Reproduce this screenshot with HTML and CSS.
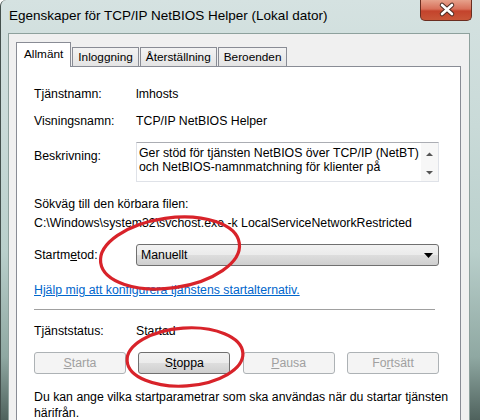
FILE: index.html
```html
<!DOCTYPE html>
<html lang="sv">
<head>
<meta charset="utf-8">
<link rel="stylesheet" href="styles.css">
</head>
<body>
<div class="window">
  <div class="titlebar">
    <span class="title">Egenskaper för TCP/IP NetBIOS Helper (Lokal dator)</span>
    <div class="close">
      <svg width="52" height="21" viewBox="0 0 52 21">
        <path d="M21 6 L31 15 M31 6 L21 15" stroke="#4a2a22" stroke-width="4.5" stroke-linecap="round"/>
        <path d="M21 6 L31 15 M31 6 L21 15" stroke="#ffffff" stroke-width="2.6" stroke-linecap="round"/>
      </svg>
    </div>
  </div>
  <div class="client">
    <div class="tabs">
      <div class="tab active">Allmänt</div>
      <div class="tab">Inloggning</div>
      <div class="tab">Återställning</div>
      <div class="tab">Beroenden</div>
    </div>
    <div class="panel">
      <div class="row r-name"><span class="label">Tjänstnamn:</span><span>lmhosts</span></div>
      <div class="row r-display"><span class="label">Visningsnamn:</span><span>TCP/IP NetBIOS Helper</span></div>
      <div class="row r-desc">
        <span class="label label-desc">Beskrivning:</span>
        <div class="desc-box">
          <div class="desc-text">Ger stöd för tjänsten NetBIOS över TCP/IP (NetBT) och NetBIOS-namnmatchning för klienter på</div>
          <div class="scroll">
            <svg width="17" height="38" viewBox="0 0 17 38">
              <path d="M5 13 L8.5 9.5 L12 13 Z" fill="#555"/>
              <path d="M5 28 L8.5 31.5 L12 28 Z" fill="#555"/>
            </svg>
          </div>
        </div>
      </div>
      <div class="path-label">Sökväg till den körbara filen:</div>
      <div class="path">C:\Windows\system32\svchost.exe -k LocalServiceNetworkRestricted</div>
      <div class="row r-start">
        <span class="label">Startm<u>e</u>tod:</span>
        <div class="combo">
          <span>Manuellt</span>
          <svg width="9" height="5" viewBox="0 0 9 5"><path d="M0 0 H9 L4.5 5 Z" fill="#000"/></svg>
        </div>
      </div>
      <a class="help" href="#">Hjälp mig att konfigurera tjänstens startalternativ.</a>
      <div class="sep"></div>
      <div class="row r-status"><span class="label">Tjänststatus:</span><span>Startad</span></div>
      <div class="buttons">
        <button class="btn" disabled><u>S</u>tarta</button>
        <button class="btn enabled">S<u>t</u>oppa</button>
        <button class="btn" disabled><u>P</u>ausa</button>
        <button class="btn" disabled>Fo<u>r</u>tsätt</button>
      </div>
      <p class="note">Du kan ange vilka startparametrar som ska användas när du startar tjänsten härifrån.</p>
    </div>
  </div>
  <svg class="marks" width="480" height="420" viewBox="0 0 480 420">
    <ellipse cx="170" cy="253" rx="70" ry="35" transform="rotate(-8 170 253)"/>
    <ellipse cx="185" cy="357" rx="58" ry="29" transform="rotate(-4 185 357)"/>
  </svg>
</div>
</body>
</html>
```
FILE: styles.css
```css
html, body {
  margin: 0;
  padding: 0;
}
body {
  width: 480px;
  height: 420px;
  overflow: hidden;
  font-family: "Liberation Sans", Arial, sans-serif;
  font-size: 12.3px;
  color: #000;
}
.window {
  position: relative;
  height: 420px;
  border-left: 1px solid #44504d;
  border-top-left-radius: 6px;
  background: linear-gradient(to bottom, #d5e2e1 0%, #c9dad8 30%, #b9cfcb 60%, #8fa8a2 85%, #4f625d 100%);
  overflow: hidden;
}
.titlebar {
  display: flex;
  justify-content: space-between;
  align-items: flex-start;
  height: 33px;
}
.title {
  font-size: 13.5px;
  padding: 7px 0 0 8px;
  line-height: 18px;
}
.close {
  width: 52px;
  height: 21px;
  margin-right: 8px;
  border: 1px solid #6a2d20;
  border-top: none;
  border-radius: 0 0 5px 5px;
  background: linear-gradient(to bottom, #e6a18b 0%, #d8705a 45%, #c4432c 55%, #c85638 100%);
  box-sizing: border-box;
}
.close svg {
  display: block;
  margin-top: -1px;
}
.client {
  margin: 0 10px 0 7px;
  border: 1px solid #8ea19d;
  background: #f0f0f0;
  padding: 8px 8px 0 7px;
  height: 400px;
}
.tabs {
  display: flex;
  align-items: flex-end;
  position: relative;
  z-index: 1;
  margin-bottom: -1px;
}
.tab {
  font-size: 11.8px;
  height: 18px;
  line-height: 18px;
  padding: 0 5px;
  margin-bottom: 1px;
  margin-right: 1px;
  border: 1px solid #898c95;
  border-bottom: none;
  background: linear-gradient(to bottom, #f3f3f3, #e4e4e4);
}
.tab.active {
  height: 24px;
  line-height: 22px;
  padding: 0 7px;
  margin-bottom: 0;
  background: #fff;
}
.panel {
  border: 1px solid #898c95;
  background: #fff;
  padding: 18px 21px 0 17px;
  height: 400px;
}
.row {
  display: flex;
  line-height: 18px;
}
.label {
  width: 102px;
  flex: none;
}
.r-display {
  margin-top: 9px;
}
.r-desc {
  margin-top: 12px;
}
.label-desc {
  padding-top: 5px;
}
.desc-box {
  flex: 1;
  height: 40px;
  box-sizing: border-box;
  border: 1px solid #dfe2e8;
  border-top-color: #abadb3;
  display: flex;
}
.desc-text {
  flex: 1;
  padding: 3px 0 0 2px;
  line-height: 14px;
}
.scroll {
  width: 17px;
  background: #f7f7f7;
}
.scroll svg {
  display: block;
}
.path-label {
  margin-top: 13px;
  line-height: 19px;
}
.path {
  line-height: 19px;
}
.r-start {
  margin-top: 11px;
  align-items: center;
}
.combo {
  flex: 1;
  height: 22px;
  box-sizing: border-box;
  border: 1px solid #707070;
  border-radius: 3px;
  background: linear-gradient(to bottom, #f2f2f2 0%, #ebebeb 50%, #dddddd 51%, #cfcfcf 100%);
  display: flex;
  align-items: center;
  justify-content: space-between;
  padding: 0 5px 0 4px;
}
.help {
  display: block;
  margin-top: 15px;
  line-height: 18px;
  color: #0066cc;
  text-decoration: underline;
}
.sep {
  margin-top: 10px;
  margin-right: 4px;
  height: 1px;
  background: #a0a0a0;
}
.r-status {
  margin-top: 12px;
}
.buttons {
  margin-top: 12px;
  display: flex;
  justify-content: space-between;
}
.btn {
  width: 92px;
  height: 22px;
  font: inherit;
  border: 1px solid #adb2b5;
  border-radius: 3px;
  background: #f4f4f4;
  color: #a0a0a0;
  padding: 0;
}
.btn.enabled {
  border-color: #707070;
  color: #000;
  background: linear-gradient(to bottom, #f2f2f2 0%, #ebebeb 50%, #dddddd 51%, #cfcfcf 100%);
}
.note {
  margin: 15px -12px 0 0;
  line-height: 16px;
}
.marks {
  position: absolute;
  left: -1px;
  top: 0;
  pointer-events: none;
}
.marks ellipse {
  fill: none;
  stroke: #d8232a;
  stroke-width: 3.2;
}
```
